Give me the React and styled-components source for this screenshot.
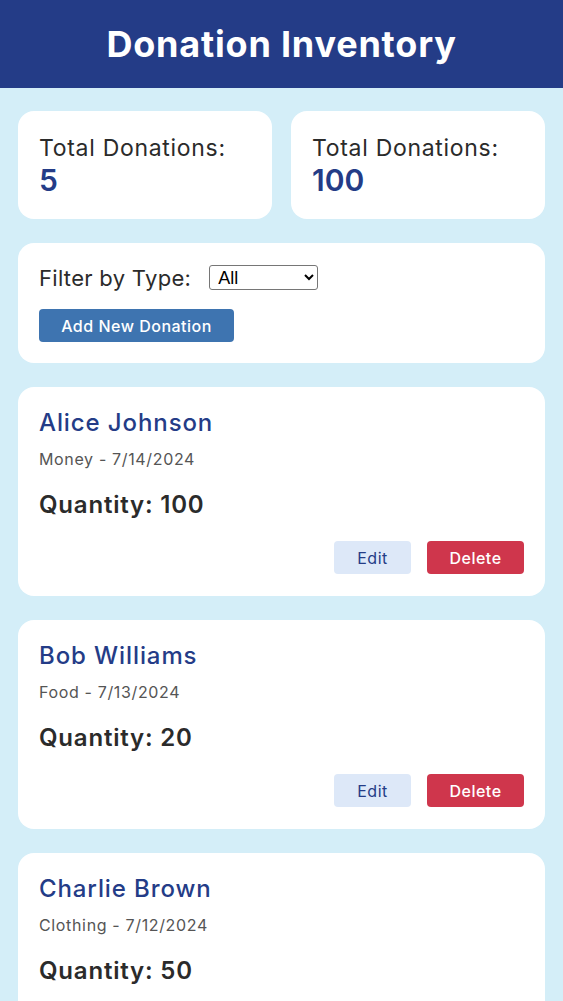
import React from "react";
import styled, { createGlobalStyle } from "styled-components";

const Global = createGlobalStyle`
  html, body { margin: 0; padding: 0; background: #d4eef8; }
  body { font-family: Inter, "Noto Sans", sans-serif; }
  * { box-sizing: border-box; }
`;

const Header = styled.header`
  height: 88px;
  background: #243c87;
  display: flex;
  align-items: center;
  justify-content: center;
`;

const Title = styled.h1`
  margin: 0;
  color: #fff;
  font-size: 36px;
  font-weight: 700;
  letter-spacing: 0.8px;
`;

const Main = styled.main`
  padding: 23px 18px;
  display: flex;
  flex-direction: column;
  gap: 24px;
`;

const Stats = styled.div`
  display: grid;
  grid-template-columns: 1fr 1fr;
  gap: 19px;
`;

const Card = styled.section`
  background: #fff;
  border-radius: 16px;
  padding: ${(p) => p.$pad || "21px"};
`;

const StatLabel = styled.div`
  font-size: 23px;
  letter-spacing: 0.7px;
  color: #2b2b2b;
  line-height: 30px;
  padding-top: 1px;
`;

const StatValue = styled.div`
  font-size: 30px;
  font-weight: 600;
  color: #243c87;
  line-height: 35px;
`;

const FilterRow = styled.div`
  display: flex;
  align-items: center;
  gap: 18px;
  height: 25px;
  font-size: 22px;
  letter-spacing: 0.3px;
  color: #2b2b2b;
`;

const Select = styled.select`
  width: 109px;
  height: 25px;
  font-family: "Liberation Sans", Arial, sans-serif;
  font-size: 18px;
  letter-spacing: 0;
  border: 1px solid #767676;
  border-radius: 3px;
  background: #fff;
  color: #000;
  padding: 0 4px;
`;

const PrimaryButton = styled.button`
  margin-top: 19px;
  width: 195px;
  height: 33px;
  border: none;
  border-radius: 4px;
  background: #3e74b0;
  color: #fff;
  font-family: inherit;
  font-size: 16px;
  letter-spacing: 0.5px;
  font-weight: 500;
`;

const Name = styled.h2`
  margin: 0;
  font-size: 24px;
  font-weight: 500;
  letter-spacing: 0.9px;
  color: #243c87;
  line-height: 32px;
`;

const Meta = styled.div`
  margin-top: 10px;
  font-size: 16px;
  letter-spacing: 0.65px;
  color: #555;
  line-height: 20px;
`;

const Qty = styled.div`
  margin-top: 21px;
  font-size: 24px;
  font-weight: 600;
  letter-spacing: 0.8px;
  color: #2b2b2b;
  line-height: 30px;
`;

const Actions = styled.div`
  margin-top: 21px;
  display: flex;
  justify-content: flex-end;
  gap: 16px;
`;

const ActionButton = styled.button`
  height: 33px;
  width: ${(p) => (p.$danger ? "97px" : "77px")};
  border: none;
  border-radius: 4px;
  font-family: inherit;
  font-size: 16px;
  letter-spacing: 0.5px;
  font-weight: ${(p) => (p.$danger ? 500 : 400)};
  background: ${(p) => (p.$danger ? "#cf364c" : "#dde8f8")};
  color: ${(p) => (p.$danger ? "#fff" : "#243c87")};
`;

const DonationCard = styled(Card)`
  padding: 20px 21px 22px;
`;

const donations = [
  { name: "Alice Johnson", type: "Money", date: "7/14/2024", qty: 100 },
  { name: "Bob Williams", type: "Food", date: "7/13/2024", qty: 20 },
  { name: "Charlie Brown", type: "Clothing", date: "7/12/2024", qty: 50 },
];

export default function App() {
  return (
    <>
      <Global />
      <Header>
        <Title>Donation Inventory</Title>
      </Header>
      <Main>
        <Stats>
          <Card>
            <StatLabel>Total Donations:</StatLabel>
            <StatValue>5</StatValue>
          </Card>
          <Card>
            <StatLabel>Total Donations:</StatLabel>
            <StatValue>100</StatValue>
          </Card>
        </Stats>
        <Card $pad="22px 21px 21px">
          <FilterRow>
            <span>Filter by Type:</span>
            <Select defaultValue="All">
              <option>All</option>
              <option>Money</option>
              <option>Food</option>
              <option>Clothing</option>
            </Select>
          </FilterRow>
          <PrimaryButton>Add New Donation</PrimaryButton>
        </Card>
        {donations.map((d) => (
          <DonationCard key={d.name}>
            <Name>{d.name}</Name>
            <Meta>
              {d.type} - {d.date}
            </Meta>
            <Qty>Quantity: {d.qty}</Qty>
            <Actions>
              <ActionButton>Edit</ActionButton>
              <ActionButton $danger>Delete</ActionButton>
            </Actions>
          </DonationCard>
        ))}
      </Main>
    </>
  );
}
